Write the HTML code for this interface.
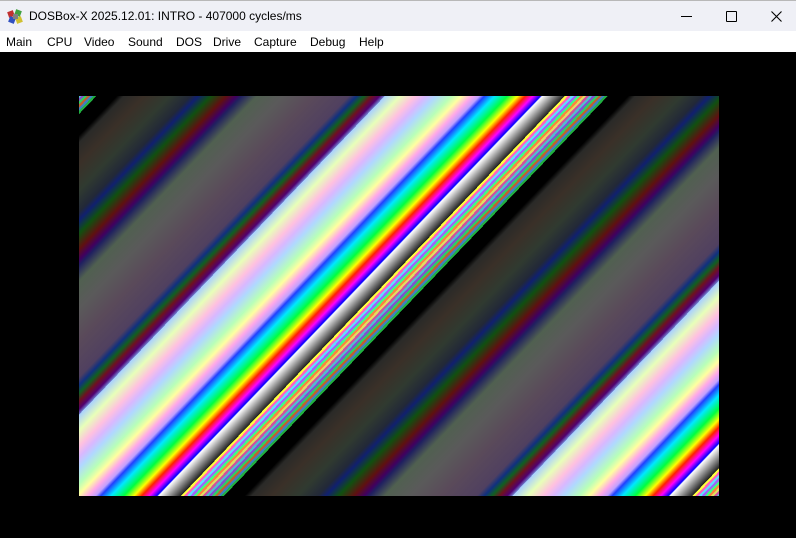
<!DOCTYPE html>
<html><head><meta charset="utf-8"><style>
html,body{margin:0;padding:0;width:796px;height:538px;overflow:hidden;background:#000;font-family:"Liberation Sans",sans-serif;}
#title{position:absolute;left:0;top:0;width:796px;height:31px;background:#eff0f6;border-top:1px solid #b8b8b8;box-sizing:border-box;}
#title .t{position:absolute;left:29px;top:8px;font-size:12px;color:#000;}
#menu{position:absolute;left:0;top:31px;width:796px;height:21px;background:#fff;}
#menu span{position:absolute;top:4px;font-size:12px;color:#000;}
#scr{position:absolute;left:79px;top:96px;width:640px;height:400px;}
</style></head><body>
<div id="title">
<svg style="position:absolute;left:7px;top:7px" width="17" height="17" viewBox="0 0 17 17">
<rect x="1" y="3" width="6" height="6" fill="#c03030" transform="rotate(-20 4 6)"/>
<rect x="8" y="2" width="6" height="6" fill="#40a040" transform="rotate(20 11 5)"/>
<rect x="2" y="9" width="6" height="6" fill="#3050c0" transform="rotate(20 5 12)"/>
<rect x="9" y="9" width="6" height="6" fill="#d0c030" transform="rotate(-20 12 12)"/>
<rect x="6" y="6" width="5" height="5" fill="#808080"/>
</svg>
<div class="t">DOSBox-X 2025.12.01: INTRO - 407000 cycles/ms</div>
<div style="position:absolute;left:681px;top:15px;width:11px;height:1px;background:#000"></div>
<div style="position:absolute;left:726px;top:10px;width:9px;height:9px;border:1px solid #000;border-radius:1px"></div>
<svg style="position:absolute;left:771px;top:10px" width="11" height="11" viewBox="0 0 11 11"><path d="M0.5 0.5L10.5 10.5M10.5 0.5L0.5 10.5" stroke="#000" stroke-width="1.1"/></svg>
</div>
<div id="menu">
<span style="left:6px">Main</span><span style="left:47px">CPU</span><span style="left:84px">Video</span><span style="left:128px">Sound</span><span style="left:176px">DOS</span><span style="left:213px">Drive</span><span style="left:254px">Capture</span><span style="left:310px">Debug</span><span style="left:359px">Help</span>
</div>
<svg id="scr" width="640" height="400" viewBox="0 0 640 400">
<defs>
<linearGradient id="g" gradientUnits="userSpaceOnUse" x1="110" y1="204" x2="376.2" y2="459.5" spreadMethod="repeat">
<stop offset="0" stop-color="#a8d0ff"/>
<stop offset=".03" stop-color="#e8ffb8"/>
<stop offset=".06" stop-color="#ffc0e0"/>
<stop offset=".08" stop-color="#d8b8ff"/>
<stop offset=".10" stop-color="#b0d8ff"/>
<stop offset=".13" stop-color="#b8ffb8"/>
<stop offset=".15" stop-color="#ffffa0"/>
<stop offset=".17" stop-color="#ffa8e8"/>
<stop offset=".185" stop-color="#c0a0ff"/>
<stop offset=".195" stop-color="#2040ff"/>
<stop offset=".215" stop-color="#00e8ff"/>
<stop offset=".24" stop-color="#00ff40"/>
<stop offset=".26" stop-color="#ffff00"/>
<stop offset=".275" stop-color="#ff2000"/>
<stop offset=".29" stop-color="#ff00ff"/>
<stop offset=".305" stop-color="#0000ff"/>
<stop offset=".308" stop-color="#ffffff"/>
<stop offset=".352" stop-color="#202020"/>
<stop offset=".352" stop-color="#ffff40"/><stop offset=".358" stop-color="#ffff40"/>
<stop offset=".358" stop-color="#ff60c0"/><stop offset=".364" stop-color="#ff60c0"/>
<stop offset=".364" stop-color="#60e0ff"/><stop offset=".370" stop-color="#60e0ff"/>
<stop offset=".370" stop-color="#a060ff"/><stop offset=".376" stop-color="#a060ff"/>
<stop offset=".376" stop-color="#40ff80"/><stop offset=".382" stop-color="#40ff80"/>
<stop offset=".382" stop-color="#ff8040"/><stop offset=".388" stop-color="#ff8040"/>
<stop offset=".388" stop-color="#e0e060"/><stop offset=".394" stop-color="#e0e060"/>
<stop offset=".394" stop-color="#d050a0"/><stop offset=".400" stop-color="#d050a0"/>
<stop offset=".400" stop-color="#50c0d0"/><stop offset=".406" stop-color="#50c0d0"/>
<stop offset=".406" stop-color="#8050d0"/><stop offset=".412" stop-color="#8050d0"/>
<stop offset=".412" stop-color="#30d060"/><stop offset=".418" stop-color="#30d060"/>
<stop offset=".418" stop-color="#c06030"/><stop offset=".424" stop-color="#c06030"/>
<stop offset=".424" stop-color="#4080c0"/><stop offset=".430" stop-color="#4080c0"/>
<stop offset=".430" stop-color="#20b040"/><stop offset=".436" stop-color="#20b040"/>
<stop offset=".436" stop-color="#000"/>
<stop offset=".476" stop-color="#000"/>
<stop offset=".49" stop-color="#2a2a28"/>
<stop offset=".53" stop-color="#3a3028"/>
<stop offset=".58" stop-color="#303a30"/>
<stop offset=".62" stop-color="#222838"/>
<stop offset=".635" stop-color="#102070"/>
<stop offset=".66" stop-color="#105010"/>
<stop offset=".69" stop-color="#601010"/>
<stop offset=".71" stop-color="#400060"/>
<stop offset=".72" stop-color="#202060"/>
<stop offset=".75" stop-color="#506050"/>
<stop offset=".80" stop-color="#5a5a5a"/>
<stop offset=".86" stop-color="#5a4a5a"/>
<stop offset=".93" stop-color="#504060"/>
<stop offset=".945" stop-color="#103080"/>
<stop offset=".96" stop-color="#106020"/>
<stop offset=".975" stop-color="#701020"/>
<stop offset=".99" stop-color="#500070"/>
<stop offset="1" stop-color="#7080d0"/>
</linearGradient>
</defs>
<rect width="640" height="400" fill="url(#g)"/>
</svg>
</body></html>
